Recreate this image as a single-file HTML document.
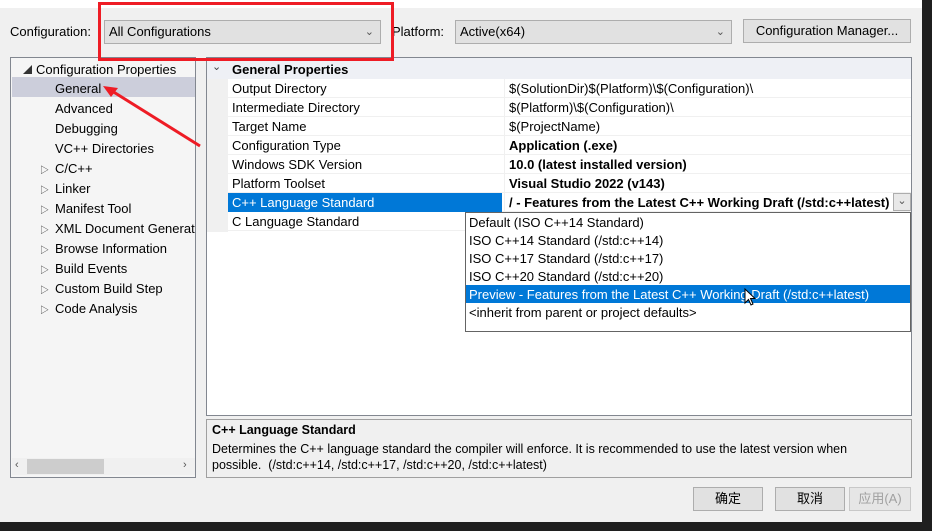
<!DOCTYPE html>
<html><head><meta charset="utf-8"><style>
*{margin:0;padding:0;box-sizing:border-box}
body{width:932px;height:531px;overflow:hidden;background:#f0f0f0;font-family:"Liberation Sans","Noto Sans CJK SC",sans-serif;font-size:13px;color:#000;position:relative}
.a{position:absolute;white-space:nowrap}
.combo{position:absolute;background:#e1e1e1;border:1px solid #adadad;height:24px;line-height:22px;padding-left:4px}
.combo .chev{position:absolute;right:6px;top:0;color:#555;font-size:11px}
.btn{position:absolute;background:#e1e1e1;border:1px solid #adadad;text-align:center;line-height:22px;height:24px}
.tree div{position:absolute;height:20px;line-height:21px}
.tri{position:absolute;font-size:9px;color:#333}
.row{position:absolute;left:228px;width:683px;height:19px;border-bottom:1px solid #f0f0f0;line-height:19px}
.row .n{position:absolute;left:4px}
.row .v{position:absolute;left:276px;border-left:1px solid #f0f0f0;padding-left:4px;width:407px;height:19px}
.li{position:absolute;left:466px;width:444px;height:18px;line-height:19px;padding-left:3px}
</style></head><body>
<div class="a" style="left:0;top:0;width:922px;height:8px;background:#fff"></div>
<div class="a" style="left:922px;top:0;width:10px;height:531px;background:#1f1f1f"></div>
<div class="a" style="left:0;top:522px;width:932px;height:9px;background:#1f1f1f"></div>

<div class="a" style="left:10px;top:24px">Configuration:</div>
<div class="combo" style="left:104px;top:20px;width:277px">All Configurations<span class="chev">&#8964;</span></div>
<div class="a" style="left:392px;top:24px">Platform:</div>
<div class="combo" style="left:455px;top:20px;width:277px">Active(x64)<span class="chev">&#8964;</span></div>
<div class="btn" style="left:743px;top:19px;width:168px">Configuration Manager...</div>

<div class="a tree" style="left:10px;top:57px;width:186px;height:421px;background:#f5f5f5;border:1px solid #828790">
<div style="left:1px;top:19px;width:183px;height:20px;background:#cccedb"></div>
<span class="tri" style="left:12px;top:5px">&#9698;</span>
<div style="left:25px;top:1px">Configuration Properties</div>
<div style="left:44px;top:20px">General</div>
<div style="left:44px;top:40px">Advanced</div>
<div style="left:44px;top:60px">Debugging</div>
<div style="left:44px;top:80px">VC++ Directories</div>
<div style="left:44px;top:100px">C/C++</div>
<div style="left:44px;top:120px">Linker</div>
<div style="left:44px;top:140px">Manifest Tool</div>
<div style="left:44px;top:160px;width:140px;overflow:hidden">XML Document Generator</div>
<div style="left:44px;top:180px">Browse Information</div>
<div style="left:44px;top:200px">Build Events</div>
<div style="left:44px;top:220px">Custom Build Step</div>
<div style="left:44px;top:240px">Code Analysis</div>
<span class="tri" style="left:29px;top:105px">&#9655;</span>
<span class="tri" style="left:29px;top:125px">&#9655;</span>
<span class="tri" style="left:29px;top:145px">&#9655;</span>
<span class="tri" style="left:29px;top:165px">&#9655;</span>
<span class="tri" style="left:29px;top:185px">&#9655;</span>
<span class="tri" style="left:29px;top:205px">&#9655;</span>
<span class="tri" style="left:29px;top:225px">&#9655;</span>
<span class="tri" style="left:29px;top:245px">&#9655;</span>
<div style="left:1px;top:400px;width:183px;height:17px;background:#f0f0f0"></div>
<div style="left:16px;top:401px;width:77px;height:15px;background:#cdcdcd"></div>
<div style="left:4px;top:399px;font-size:11px;color:#555;line-height:17px">&#8249;</div>
<div style="left:172px;top:399px;font-size:11px;color:#555;line-height:17px">&#8250;</div>
</div>

<div class="a" style="left:206px;top:57px;width:706px;height:359px;background:#fff;border:1px solid #828790"></div>
<div class="a" style="left:207px;top:58px;width:21px;height:174px;background:#f0f0f0"></div>
<div class="a" style="left:207px;top:58px;width:704px;height:21px;background:#eef0f5"></div>
<div class="a" style="left:212px;top:60px;font-size:11px;color:#444">&#8964;</div>
<div class="a" style="left:232px;top:62px;font-weight:bold">General Properties</div>
<div class="row" style="top:79px"><span class="n">Output Directory</span><span class="v">$(SolutionDir)$(Platform)\$(Configuration)\</span></div>
<div class="row" style="top:98px"><span class="n">Intermediate Directory</span><span class="v">$(Platform)\$(Configuration)\</span></div>
<div class="row" style="top:117px"><span class="n">Target Name</span><span class="v">$(ProjectName)</span></div>
<div class="row" style="top:136px"><span class="n">Configuration Type</span><span class="v" style="font-weight:bold">Application (.exe)</span></div>
<div class="row" style="top:155px"><span class="n">Windows SDK Version</span><span class="v" style="font-weight:bold">10.0 (latest installed version)</span></div>
<div class="row" style="top:174px"><span class="n">Platform Toolset</span><span class="v" style="font-weight:bold">Visual Studio 2022 (v143)</span></div>
<div class="row" style="top:193px"><span class="n" style="left:0;width:274px;height:19px;background:#0078d7;color:#fff;padding-left:4px">C++ Language Standard</span><span class="v" style="font-weight:bold;overflow:hidden;width:388px">/ - Features from the Latest C++ Working Draft (/std:c++latest)</span></div>
<div class="a" style="left:893px;top:193px;width:18px;height:18px;border:1px solid #adadad;background:#e8e8e8;text-align:center;font-size:11px;color:#555;line-height:14px">&#8964;</div>
<div class="row" style="top:212px"><span class="n">C Language Standard</span></div>

<div class="a" style="left:465px;top:212px;width:446px;height:120px;background:#fff;border:1px solid #646464"></div>
<div class="li" style="top:213px">Default (ISO C++14 Standard)</div>
<div class="li" style="top:231px">ISO C++14 Standard (/std:c++14)</div>
<div class="li" style="top:249px">ISO C++17 Standard (/std:c++17)</div>
<div class="li" style="top:267px">ISO C++20 Standard (/std:c++20)</div>
<div class="li" style="top:285px;background:#0078d7;color:#fff">Preview - Features from the Latest C++ Working Draft (/std:c++latest)</div>
<div class="li" style="top:303px">&lt;inherit from parent or project defaults&gt;</div>
<svg class="a" style="left:744px;top:288px" width="14" height="20"><path d="M1 1 L1 15 L4.5 11.5 L7 17 L9 16 L6.5 10.5 L11 10.5 Z" fill="#fff" stroke="#000" stroke-width="1"/></svg>

<div class="a" style="left:206px;top:419px;width:706px;height:59px;border:1px solid #a0a0a0;background:#f0f0f0"></div>
<div class="a" style="left:212px;top:423px;font-weight:bold;font-size:12.5px">C++ Language Standard</div>
<div class="a" style="left:212px;top:442px;font-size:12.5px">Determines the C++ language standard the compiler will enforce. It is recommended to use the latest version when</div>
<div class="a" style="left:212px;top:458px;font-size:12.5px">possible.&nbsp; (/std:c++14, /std:c++17, /std:c++20, /std:c++latest)</div>

<div class="btn" style="left:693px;top:487px;width:70px">确定</div>
<div class="btn" style="left:775px;top:487px;width:70px">取消</div>
<div class="btn" style="left:849px;top:487px;width:62px;color:#a0a0a0;border-color:#c8c8c8;background:#e6e6e6">应用(A)</div>

<div class="a" style="left:98px;top:2px;width:296px;height:59px;border:3px solid #ee1c25"></div>
<svg class="a" style="left:0;top:0" width="932" height="531"><line x1="200" y1="146" x2="112" y2="91" stroke="#ee1c25" stroke-width="3"/><path d="M103 86 L118 88 L111 97 Z" fill="#ee1c25"/></svg>
</body></html>
